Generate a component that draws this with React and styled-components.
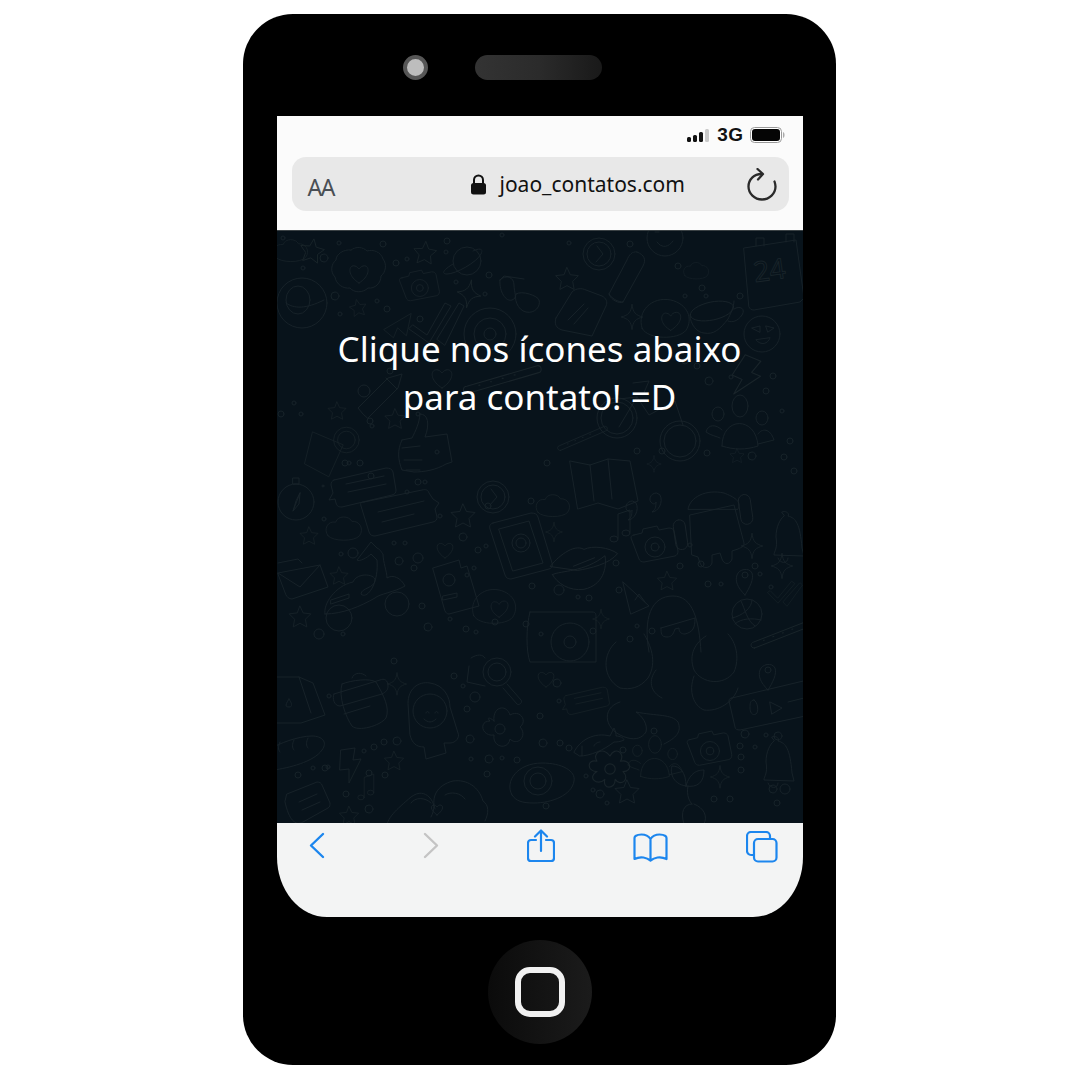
import React from "react";
import styled, { createGlobalStyle } from "styled-components";

const GlobalStyle = createGlobalStyle`
  html, body {
    margin: 0;
    padding: 0;
    background: #fff;
  }
`;

const Page = styled.div`
  width: 1080px;
  height: 1080px;
  overflow: hidden;
  padding: 14px 0 0 243px;
  box-sizing: border-box;
  font-family: "Noto Sans", sans-serif;
`;

const Phone = styled.div`
  width: 593px;
  height: 1051px;
  background: #000;
  border-radius: 50px;
  display: flex;
  flex-direction: column;
  align-items: center;
`;

const TopBezel = styled.div`
  width: 100%;
  height: 102px;
  flex: none;
  box-sizing: border-box;
  padding: 4px 0 0 160px;
  display: flex;
  align-items: center;
  gap: 47px;
`;

const Camera = styled.div`
  width: 17px;
  height: 17px;
  border-radius: 50%;
  background: #bdbdbd;
  border: 4px solid #565656;
`;

const Speaker = styled.div`
  width: 127px;
  height: 25px;
  border-radius: 13px;
  background: linear-gradient(90deg, #333 0%, #2b2b2b 50%, #191919 100%);
`;

const Screen = styled.div`
  width: 526px;
  height: 801px;
  flex: none;
  display: flex;
  flex-direction: column;
  overflow: hidden;
  border-radius: 0 0 50px 50px / 0 0 60px 60px;
`;

const Chrome = styled.div`
  height: 114px;
  flex: none;
  background: #fbfbfb;
  border-bottom: 1px solid #3b4245;
  display: flex;
  flex-direction: column;
`;

const StatusRow = styled.div`
  height: 41px;
  flex: none;
  box-sizing: border-box;
  padding: 0 17px 3px 0;
  display: flex;
  align-items: center;
  justify-content: flex-end;
`;

const Carrier = styled.span`
  font-family: "Liberation Sans", sans-serif;
  font-weight: 700;
  font-size: 19px;
  letter-spacing: 0.5px;
  color: #111;
  margin: 0 6px 0 7px;
`;

const AddressBar = styled.div`
  height: 54px;
  margin: 0 14px 0 15px;
  background: #e8e8e8;
  border-radius: 14px;
  display: flex;
  align-items: center;
  padding: 0 12px 0 16px;
`;

const TextSize = styled.span`
  font-size: 23px;
  letter-spacing: -1.5px;
  color: #4a4f55;
  width: 162px;
  flex: none;
  padding-top: 6px;
`;

const Url = styled.span`
  font-size: 21px;
  color: #111;
  margin-left: 13px;
  flex: 1;
`;

const Wall = styled.div`
  position: relative;
  flex: 1;
  background: #08131b;
  overflow: hidden;
`;

const WallArt = styled.svg`
  position: absolute;
  inset: 0;
  width: 100%;
  height: 100%;
`;

const Message = styled.p`
  position: relative;
  margin: 0;
  padding-top: 94px;
  text-align: center;
  font-size: 35px;
  line-height: 48px;
  color: #fff;
`;

const BottomBar = styled.div`
  height: 94px;
  flex: none;
  background: #f3f4f4;
  display: flex;
  align-items: flex-start;
`;

const BarSlot = styled.div`
  width: ${(p) => p.$w}px;
  flex: none;
  padding: ${(p) => p.$top}px 0 0 ${(p) => p.$left}px;
  box-sizing: border-box;
  line-height: 0;
`;

const BottomBezel = styled.div`
  flex: 1;
  width: 100%;
  box-sizing: border-box;
  padding-top: 2px;
  display: flex;
  align-items: center;
  justify-content: center;
`;

const HomeButton = styled.div`
  width: 104px;
  height: 104px;
  border-radius: 50%;
  background: linear-gradient(90deg, #0b0b0b, #1b1b1b);
  display: flex;
  align-items: center;
  justify-content: center;
`;

const HomeSquare = styled.div`
  width: 38px;
  height: 38px;
  border: 6px solid #f1f1f1;
  border-radius: 15px;
`;

const BLUE = "#1c86ee";

function SignalBars() {
  return (
    <svg width="23" height="15" viewBox="0 0 23 15">
      <rect x="0" y="9" width="4" height="5" rx="1.5" fill="#111" />
      <rect x="6" y="7" width="4" height="7" rx="1.5" fill="#111" />
      <rect x="12" y="4" width="4" height="10" rx="1.5" fill="#111" />
      <rect x="18" y="1" width="4" height="13" rx="1.5" fill="#c9c9c9" />
    </svg>
  );
}

function Battery() {
  return (
    <svg width="36" height="16" viewBox="0 0 36 16">
      <rect x="0.5" y="0.5" width="31" height="15" rx="4" fill="#fff" stroke="#999" />
      <rect x="2" y="2" width="28" height="12" rx="3" fill="#050505" />
      <path d="M33 5c2 .5 2 5.500 0 6z" fill="#aaa" />
    </svg>
  );
}

function LockIcon() {
  return (
    <svg width="17" height="21" viewBox="0 0 17 21" fill="none">
      <path d="M4 10V6a4.500 4.500 0 0 1 9 0v4" stroke="#111" strokeWidth="2" />
      <rect x="1" y="9" width="15" height="11.500" rx="2.500" fill="#111" />
    </svg>
  );
}

function ReloadIcon() {
  return (
    <svg width="30" height="33" viewBox="0 0 30 33" fill="none" stroke="#2a2a2a" strokeWidth="2.300" strokeLinecap="round" strokeLinejoin="round">
      <path d="M14.500 6C7 6 1.500 11.500 1.500 18.500S7.500 31.500 15 31.500 28.500 25.500 28.500 18.500c0-2-.5-3.500-1-5" />
      <path d="M10.500 1L16 6l-5 5.500" />
    </svg>
  );
}

function Chevron({ color, flip }) {
  return (
    <svg width="16" height="27" viewBox="0 0 16 27" fill="none">
      <path
        d={flip ? "M2 2l12 11.500L2 25" : "M14 2L2 13.500 14 25"}
        stroke={color}
        strokeWidth="2.400"
        strokeLinecap="round"
        strokeLinejoin="round"
      />
    </svg>
  );
}

function ShareIcon() {
  return (
    <svg width="28" height="34" viewBox="0 0 28 34" fill="none" stroke={BLUE} strokeWidth="2.200" strokeLinecap="round" strokeLinejoin="round">
      <path d="M9 11H4a3 3 0 0 0-3 3v15a3 3 0 0 0 3 3h20a3 3 0 0 0 3-3V14a3 3 0 0 0-3-3h-5" />
      <path d="M14 22V2M8 7.500L14 1.500l6 6" />
    </svg>
  );
}

function BookIcon() {
  return (
    <svg width="35" height="29" viewBox="0 0 35 29" fill="none" stroke={BLUE} strokeWidth="2.200" strokeLinecap="round" strokeLinejoin="round">
      <path d="M17.500 27V6c-2-3-5-4.500-9-4.500-2.500 0-4.500.5-6 1.500-.5.500-1 1-1 2L1.500 26c3-1.500 6-2 9-1.500 3 .5 5 1.500 7 3 2-1.500 4-2.500 7-3 3-.5 6 0 9 1.500L33.500 5c0-1-.5-1.500-1-2-1.500-1-3.500-1.500-6-1.500-4 0-7 1.500-9 4.500" />
    </svg>
  );
}

function TabsIcon() {
  return (
    <svg width="32" height="32" viewBox="0 0 32 32" fill="none" stroke={BLUE} strokeWidth="2.200" strokeLinejoin="round">
      <path d="M7 24H5a4 4 0 0 1-4-4V5a4 4 0 0 1 4-4h15a4 4 0 0 1 4 4v2" />
      <rect x="8" y="8" width="22.500" height="22.500" rx="4" />
    </svg>
  );
}

// local outlines, all drawn round 0,0
const SHAPES = {
  star: <path d="M0-12l3.500 7.500 8.500 1-6 6 1.500 8.500L0 7l-7.500 4 1.500-8.500-6-6 8.500-1z" />,
  spark: <path d="M0-14C1 -5 4-2 12 0 4 2 1 5 0 14-1 5-4 2-12 0-4-2-1-5 0-14z" />,
  heart: <path d="M0 10C-14 1-11-10-4-8c2 .5 3 2 4 3 1-1 2-2.500 4-3C11-10 14 1 0 10z" />,
  cloud: <path d="M-20 8c-6-8 0-18 9-16 2-8 16-8 19-1 9-1 15 9 9 17-6 7-31 7-37 0z" />,
  camera: (
    <g>
      <path d="M-20-12l8-2 1-4 14-3 2 4 10-2c3 0 4 1 5 3l4 20c0 3-1 4-3 5l-31 6c-3 0-4-1-5-3l-8-21c0-2 1-3 3-3z" />
      <circle cx="1" cy="0" r="10" />
      <circle cx="1" cy="0" r="4" />
    </g>
  ),
  planet: (
    <g>
      <circle r="14" />
      <path d="M-14 3c-10 6-12 10-6 10 9 0 30-12 34-20 3-6-2-6-8-3" />
    </g>
  ),
  flower: (
    <g>
      <path d="M-8-24c5-4 12-3 16 1 6-2 14 1 16 8 4 5 3 13-2 17 0 7-6 13-13 12-5 5-14 5-18 0-7 1-14-4-15-11-5-5-4-13 1-17 0-6 8-11 15-10z" />
      <path d="M0 9C-13 1-10-10-4-8c2 .5 3 2 4 3 1-1 2-2.500 4-3C10-10 13 1 0 9z" />
    </g>
  ),
  ball: (
    <g>
      <circle r="25" />
      <ellipse cx="-4" cy="-3" rx="12" ry="14" />
      <path d="M-16 0c8 6 20 6 38-3" />
    </g>
  ),
  glasses: (
    <g>
      <path d="M-20-14c6-6 14-3 14 5S-2 4-8 6s-13-8-12-20z" />
      <path d="M-4 0c6-4 22 2 23 6 2 6-4 14-13 12S-6 4-4 0z" />
      <path d="M-20-14l4-4 20 3" />
    </g>
  ),
  plane: <path d="M-20 8L14-12 8 16-3 6-8 18z" />,
  check: (
    <g>
      <path d="M-24 4l14 10 18-32 6 3L-8 22-28 8z" />
      <path d="M0 18L22-18l5 3L8 24z" />
    </g>
  ),
  donut: (
    <g>
      <circle r="26" />
      <circle r="16" />
      <circle r="6" />
    </g>
  ),
  pencil: <path d="M-24 20l-5-6 30-30 14-4-4 14-30 30zM-1-16l11 11" />,
  thumb: <path d="M-22-8l10-2c4-8 7-14 8-24 8 0 10 10 5 23l22-3 5 28-6 2c-10 6-22 8-32 8l-12-2c-4-10-5-20 0-30zM-22 0l18-2M-20 12h18M-18 22h14" />,
  cocktail: (
    <g>
      <path d="M-24-20L14-4-4 36-34 20z" />
      <circle cx="18" cy="-10" r="16" />
      <circle cx="18" cy="-10" r="11" />
    </g>
  ),
  clock: (
    <g>
      <circle r="16" />
      <circle r="12" />
      <path d="M-2-8L4 0-3 8" />
    </g>
  ),
  bottle: <path d="M10-26c8 3 9 8 6 14L-4 24c-4 2-12-2-14-8L0-18c2-5 5-9 10-8zM-18 16c4 6 10 8 14 8" />,
  calendar: (
    <g>
      <path d="M-26-26l52-8 8 58-4 4-46 8c-3 0-4-1-5-3zM-14-28v-8h8v8M16-32v-8h8v8" />
      <text x="0" y="6" fontFamily="Noto Sans, sans-serif" fontSize="28" fill="none" textAnchor="middle" transform="rotate(-8)">24</text>
    </g>
  ),
  cup: (
    <g>
      <ellipse rx="22" ry="9" transform="rotate(-12)" />
      <path d="M-22 4c0 10 8 18 14 18 10 2 16-4 24-14 2-4 6-12 6-18M22-2c6-4 12 0 8 6-4 6-10 8-14 6" />
    </g>
  ),
  box: <path d="M-26 0l16-26c4-4 10-4 14-2l16 6c4 2 6 6 4 10l-14 30-30-6c-6-2-8-6-6-12zM-14 2l16-16M-8 6L6-10" />,
  blobheart: (
    <g>
      <path d="M-24 10C-30-8-14-24 6-20c18 4 24 20 16 32-8 10-40 10-46-2z" />
      <path d="M6 12C-8 4-4-8 2-6c2 0 3 2 4 3 1-2 3-4 6-4 6 0 8 10-6 19z" />
    </g>
  ),
  face: (
    <g>
      <circle r="18" />
      <path d="M-10-6l8-2v6zM4-8l8 2-6 4zM-6 6c5 6 12 4 14-2z" />
    </g>
  ),
  smile: (
    <g>
      <circle r="18" />
      <path d="M-8 4c5 7 12 5 16-1M-10-6h4M5-8h4" />
    </g>
  ),
  wheel: (
    <g>
      <circle r="20" />
      <circle r="16" />
    </g>
  ),
  bike: <path d="M-58-22l18-2 12 18 26-14 8 24M-40-24l-18 30M-44-38l16-2-6 14" />,
  people: (
    <g>
      <ellipse cx="0" cy="-22" rx="8" ry="11" />
      <ellipse cx="-22" cy="-14" rx="6" ry="7" />
      <ellipse cx="22" cy="-10" rx="6" ry="7" />
      <path d="M-18 18c0-30 34-30 36 0-12 4-24 4-36 0zM-18 2c-6-6-14-6-16 2 6 4 10 4 14 6M18 6c4-6 12-6 16 6l-16 4" />
    </g>
  ),
  map: <path d="M-30-10l20 4 18-6 22 2 8 40-20 8-20-6-20 6zM-10-6l4 36M8-12l4 40" />,
  compass: (
    <g>
      <circle r="18" />
      <path d="M4-9L-3 9 0-1zM4-9L3 2-3 9M-3-24h6v6h-6z" />
    </g>
  ),
  bubble: <path d="M-30-12l52-12c4 0 6 1 7 4l3 18c0 3-1 4-4 5l-50 12c-4 0-5-1-6-4l-1-4-6 1 4-7-2-8c0-3 1-4 3-5zM-18-8l38-8M-16 0l38-8" />,
  bubbleBig: <path d="M-40-14l58-12c4-1 6 0 7 3l4 6 6 4-4 6 2 8c0 3-1 4-4 5l-58 14c-3 0-5-1-6-4l-8-26c-1-3 0-4 3-4zM-26-4l46-11M-22 6l32-8" />,
  phone: (
    <g>
      <path d="M-26-24l38-10c4 0 6 1 7 4l14 46c1 3 0 5-3 6l-38 10c-3 0-5-1-6-4l-15-46c-1-3 0-5 3-6z" />
      <path d="M-20-18l30-8 14 42-30 8z" />
      <circle cx="2" cy="-4" r="9" />
      <circle cx="2" cy="-4" r="5" />
    </g>
  ),
  envelope: <path d="M-26-8l42-8 8 22-36 12c-3 0-5-2-6-4zM-26-8l22 14 20-22M-26-18l20-4 4 4" />,
  scooter: (
    <g>
      <path d="M-42 22c-2-10 10-28 28-32 4-10 22-8 22-2 0 8-14 8-14 14 6 6 18-10 16-34l-6-6c-4 4-12 8-14 6l14-18 6 6c4 2 4 4 6 6 0 8 4 18 4 24 6-4 14 0 18 8-10 6-26 8-30 12-14 8-32 16-50 16z" />
      <circle cx="-28" cy="26" r="13" />
      <circle cx="30" cy="12" r="12" />
      <path d="M-36 8l18-6 0 4-18 6z" />
    </g>
  ),
  passport: (
    <g>
      <path d="M-16-18l26-8 2 8 6-2 12 40-30 8c-2 0-3-1-4-3z" />
      <circle cx="0" cy="-6" r="6" />
      <path d="M-6 10l14-3v4l-14 3z" />
    </g>
  ),
  lips: (
    <g>
      <path d="M-32 4c6-8 22-22 32-16 8-4 24-2 32 4-8 10-26 14-38 16z" />
      <path d="M-30 12c8-4 30-2 50-18 2 12-2 28-20 32-14 2-26-6-30-14zM-10 4l20-8" />
    </g>
  ),
  android: (
    <g>
      <path d="M-26-20c2-12 18-20 36-16 10 4 18 8 14 16z" />
      <path d="M-24-14l44-10 10 38c0 4-2 4-6 6l-6 2v8c-2 6-8 6-10 0l-2-6-8 2v8c-2 6-10 6-12 0l-2-6-6-2z" />
      <rect x="-40" y="-14" width="12" height="30" rx="6" transform="rotate(-8)" />
      <rect x="28" y="-30" width="12" height="30" rx="6" transform="rotate(-8)" />
    </g>
  ),
  bell: <path d="M-2-24c4-2 8 2 6 4 8 2 12 8 14 32l2 8-30-1c0-4 4-6 2-18 0-10 4-18 8-21zM-6 22c2 6 10 6 10 0" />,
  music: (
    <g>
      <path d="M-6 12V-12l12-4v22" />
      <ellipse cx="-10" cy="13" rx="4" ry="3" />
      <ellipse cx="2" cy="7" rx="4" ry="3" />
    </g>
  ),
  quotes: <path d="M-18-8c-6 0-8 8-4 10 2 2 4 0 4-1 0 6-1 8-4 10 6 0 12-10 8-17zM6-16c-6 0-8 8-4 10 2 2 4 0 4-1 0 6-1 8-4 10 6 0 12-10 8-17z" />,
  wedge: <path d="M-12-14l26 24-18 8zM0 4l4-6 6 8" />,
  record: (
    <g>
      <path d="M-40-24l62 0c4 0 4 2 4 6v44h-66c-4-10-4-36 0-50z" />
      <circle cx="0" cy="6" r="19" />
      <circle cx="0" cy="6" r="6" />
    </g>
  ),
  ghost: (
    <g>
      <path d="M-28 30c-6-34 2-56 24-56 20 0 26 24 28 56" />
      <path d="M-16 6l34-10c0 10-2 14-10 16-4 0-6-2-6-6l-4 1c-2 6-4 8-8 8-6 0-6-4-6-9z" />
    </g>
  ),
  basket: (
    <g>
      <circle r="15" />
      <path d="M-15 4c10-2 20-10 20-18M-6-13c4 8 6 20 14 25M-12 10C-6 4 6 4 14 6" />
    </g>
  ),
  pin: (
    <g>
      <path d="M0 14c-8-8-10-14-8-20 2-6 12-8 15-2 2 6-2 14-7 22z" />
      <circle cy="-6" r="3" />
    </g>
  ),
  milk: <path d="M-20-22h22l14 6 12 32-24 8h-26zM2-22l12 36M-8 0c-4 6-4 8 0 8 3 0 4-2 0-8z" />,
  bread: <path d="M-26 26C-12 24 14 18 22 6c6-8 0-14-10-14-14 0-34 8-40 12M-20-2c-2 4-2 8 0 10M-6-4c-2 4-2 8 0 10M8-6c-2 4-2 8 0 10" />,
  pack: (
    <g>
      <path d="M-22-22c10-4 28-6 34-2 8 14 14 26 10 36-6 8-28 14-34 8-6-8-14-30-10-42z" />
      <path d="M-12-28c2-6 10-6 14-2M-30-12l46-14c4-2 8 0 8 6 0 4-2 6-6 8l-42 12c-6 0-8-8-6-12zM-20 8l26-8" />
    </g>
  ),
  astro: (
    <g>
      <path d="M-22-16c0-14 10-22 22-20 14 2 20 14 20 24l8 26c2 4-2 10-8 10h-6l2 10-20 6-2-12c-8 0-12-4-14-12z" />
      <circle cx="0" cy="-8" r="17" />
      <path d="M-4-6c0-2 3-2 3 0M5-6c0-2 3-2 3 0M-6 0c4 4 8 4 12 0" />
    </g>
  ),
  petals: (
    <g>
      <path d="M-6-8c-2-14 12-18 16-6 10-6 18 6 10 12 8 8-2 20-10 12-2 12-18 8-16-4-12 2-16-14-4-14-4-4 0-4 4 0z" />
      <circle r="5" />
    </g>
  ),
  magnifier: (
    <g>
      <circle r="14" />
      <circle r="9" />
      <path d="M10 12l14 16c2 2-2 6-4 4L6 16M-26-14c6-4 12-4 14 0M-28-6l-2 16 18 4" />
    </g>
  ),
  bolt: <path d="M-6-14l14-2-2 12 8-1-12 24 0-14-9 1z" />,
  note: <path d="M-22-8l30-12c3 0 4 1 5 3l8 18c0 2 0 4-2 5L-6 20c-8 4-14-2-18-20zM-10 0l18-8M-7 8l18-8" />,
  hands: (
    <g>
      <path d="M-50 30c-2-10 10-20 24-32 8-6 14-4 18 0 6 6 6 12 2 20M-2 10c-4-12 2-24 18-28 14-2 26 6 30 20 6 4 6 12 2 20" />
      <path d="M0 16c-8-6-6-10-3-10 1 0 2 1 3 2 1-1 2-2 3-2 3 0 5 4-3 10zM-26 4c4-6 14-6 20 0M8-4c6-4 16-2 20 4" />
    </g>
  ),
  fish: <path d="M-20 10c6-12 20-20 36-16l4-8c2 4 2 6 2 8 4 0 8 2 8 4-4 2-8 2-10 2-10 8-24 14-34 14zM-12 4v10M6 0c-2 0-6 2-6 4" />,
  eye: (
    <g>
      <path d="M-40 16c-8-14 6-32 30-32 20 0 34 8 32 18-2 14-22 22-40 22-12 0-18-2-22-8z" />
      <circle cx="-14" cy="2" r="14" />
      <circle cx="-14" cy="2" r="8" />
    </g>
  ),
  snake: <path d="M-46-54c-14 12-14 36 4 46 10 2 20 0 28-10 10-16 2-34-4-44M-42 6c-20 6-16 30 8 36 8 2 14 0 18-6 2-8-4-16-10-20 20 4 36 2 42 10 4 10-2 16-14 22M-6-26c-8 10-6 22 6 28M44-60c-10 6-18 18-12 34 8 14 30 16 40 2 6-14 2-30-6-38M32-20c-6 16 0 30 10 34 14 2 30-8 34-22" />,
  voice: (
    <g>
      <path d="M-42-8l84-20c3 0 4 1 5 3l6 26c0 3-1 4-3 5l-84 18c-3 0-5-1-5-3l-6-26c0-2 1-3 3-3z" />
      <path d="M-20-6c-4 0-4 4-4 8s2 8 6 6c3-2 2-12-2-14zM-4-4L8 2-2 8zM14-4l24-6" />
    </g>
  ),
  gear: (
    <g>
      <path d="M0-10c4-8 12-2 8 4 8-2 10 8 2 8 6 6-2 12-6 6 0 8-10 8-8 0-6 6-14-2-6-6-8 0-8-10 0-8-4-6 4-12 10-4z" />
      <circle r="4" />
    </g>
  ),
  leaves: (
    <g>
      <path d="M-4-6c-14-2-16-14-14-20 8 0 14 6 14 20zM-4-6c4-14 12-16 18-16 0 12-6 18-18 16zM-2-6c-2 10 2 16 4 18M2 12c-8 0-12 8-8 20M4 12c10 4 14 12 10 20" />
    </g>
  ),
  lines: <path d="M-30 12l60-12c4 0 4-6 0-6l-60 12c-4 0-4 6 0 6zM-20 6h1M-10 4h1M0 2h1M10 0h1" />,
};

// kind, x, y, rotation, scale — placed to follow the wallpaper
const DOODLES = [
  ["star", 35, 20, 10, 1], ["flower", 82, 43, 0, 1], ["ball", 25, 72, 0, 1], ["star", 81, 77, -10, 0.7],
  ["camera", 142, 57, 0, 0.85], ["star", 148, 22, 5, 0.95], ["planet", 190, 30, 0, 1], ["spark", 192, 63, 10, 1],
  ["glasses", 243, 63, 0, 1], ["plane", 123, 92, 0, 0.8], ["check", 160, 90, 0, 1], ["donut", 213, 103, 0, 1],
  ["pencil", 110, 163, 0, 1], ["heart", 165, 147, 0, 1], ["lines", 225, 145, -5, 1.2], ["thumb", 147, 217, 0, 1],
  ["cocktail", 55, 217, 0, 0.8], ["star", 60, 180, 0, 0.75], ["star", 118, 188, 0, 0.85], ["cloud", 15, 20, 0, 0.8],
  ["clock", 322, 23, 0, 1], ["bottle", 350, 47, 0, 1], ["calendar", 493, 43, 0, 1], ["cup", 435, 80, 0, 1],
  ["box", 305, 87, 0, 1], ["spark", 355, 86, 0, 0.9], ["blobheart", 388, 88, 0, 0.95], ["face", 485, 103, 0, 1],
  ["star", 290, 48, 0, 0.95], ["smile", 388, 7, 0, 1], ["wheel", 403, 210, 0, 1], ["wheel", 340, 187, 0, 1],
  ["bike", 400, 190, 0, 1], ["people", 463, 197, 0, 1], ["map", 323, 240, 0, 1], ["star", 460, 225, 0, 0.6],
  ["spark", 377, 233, 0, 0.6], ["cloud", 420, 40, 0, 0.6], ["lines", 305, 205, -12, 0.8], ["bolt", 466, 142, 30, 1.2],

  ["compass", 19, 271, 0, 1], ["bubble", 87, 261, 0, 1], ["bubbleBig", 127, 285, 0, 1], ["clock", 216, 266, 0, 1],
  ["cloud", 68, 298, 0, 0.85], ["star", 32, 305, 0, 0.75], ["star", 186, 285, 0, 1], ["star", 62, 345, 0, 0.75],
  ["star", 23, 386, 0, 0.9], ["phone", 242, 316, 0, 1], ["envelope", 27, 350, 0, 1], ["scooter", 90, 361, 0, 1],
  ["passport", 172, 355, 0, 1], ["blobheart", 217, 376, 0, 0.85], ["heart", 168, 319, 0, 0.8],
  ["cloud", 277, 275, 0, 0.8], ["lips", 307, 331, 0, 1.05], ["camera", 377, 316, 0, 1], ["android", 437, 298, 0, 1],
  ["bell", 507, 305, 0, 1], ["music", 347, 295, 0, 1], ["quotes", 373, 278, 0, 1], ["star", 390, 350, 0, 0.8],
  ["wedge", 358, 365, 0, 1], ["record", 293, 405, 0, 1], ["ghost", 400, 391, 0, 1], ["basket", 470, 383, 0, 1],
  ["spark", 475, 315, 0, 0.9], ["spark", 505, 335, 0, 0.9], ["pin", 468, 350, 0, 1], ["spark", 277, 301, 0, 0.7],
  ["check", 508, 360, 10, 0.6], ["lines", 505, 400, -10, 1], ["spark", 324, 388, 0, 0.7],

  ["milk", 20, 468, 0, 1], ["bread", 23, 513, 0, 1], ["pack", 87, 475, 0, 1], ["astro", 153, 488, 0, 1],
  ["petals", 223, 498, 0, 1], ["magnifier", 220, 441, 0, 1], ["bolt", 70, 533, 0, 1], ["star", 117, 530, 0, 0.8],
  ["note", 32, 571, 0, 1], ["hands", 160, 568, 0, 1], ["music", 92, 556, 0, 0.8], ["spark", 120, 453, 0, 0.8],
  ["star", 72, 585, 0, 0.8], ["eye", 275, 548, 0, 1], ["bubble", 310, 473, 0, 0.7], ["fish", 317, 511, 0, 1],
  ["snake", 385, 465, 0, 1], ["voice", 497, 475, 0, 1], ["camera", 432, 520, 0, 0.95], ["bell", 497, 530, 0, 1],
  ["people", 378, 531, 0, 0.8], ["gear", 333, 538, 0, 1.3], ["star", 350, 561, 0, 1], ["spark", 443, 546, 0, 0.8],
  ["leaves", 413, 561, 0, 1], ["pin", 491, 445, 0, 1], ["heart", 269, 448, 0, 0.8],
];

// the little rings scattered between the drawings
const DOTS = [
  [6, 7, 2], [47, 27, 4], [62, 12, 2], [106, 13, 3], [119, 32, 3], [130, 28, 2], [58, 65, 4], [100, 70, 2],
  [110, 78, 3], [63, 83, 2], [143, 88, 3], [170, 10, 3], [169, 21, 2], [179, 51, 2], [208, 63, 2], [212, 44, 3],
  [225, 4, 2], [26, 37, 2], [113, 140, 3], [93, 190, 3], [24, 183, 2], [17, 172, 2], [4, 183, 3], [87, 160, 6],
  [68, 232, 3], [72, 232, 2], [83, 232, 3], [95, 195, 2], [141, 183, 2], [160, 221, 2], [94, 245, 3], [148, 251, 2],
  [270, 232, 3], [292, 12, 2], [353, 13, 3], [401, 35, 3], [425, 57, 3], [408, 65, 2], [429, 65, 2], [463, 65, 3],
  [408, 130, 3], [420, 135, 3], [432, 150, 4], [454, 146, 2], [489, 160, 3], [496, 145, 3], [505, 180, 2], [513, 210, 3],
  [360, 220, 3], [385, 220, 3], [430, 222, 3], [475, 225, 4], [507, 226, 3], [517, 240, 3], [46, 255, 1],
  [130, 261, 2], [141, 251, 3], [47, 288, 2], [64, 323, 2], [76, 322, 5], [117, 312, 2], [128, 312, 2], [141, 327, 5],
  [122, 330, 4], [137, 337, 3], [163, 285, 2], [197, 337, 2], [190, 344, 2], [201, 319, 3], [186, 306, 4], [209, 315, 2],
  [211, 275, 3], [254, 270, 3], [255, 355, 3], [282, 359, 5], [301, 366, 2], [312, 367, 3], [339, 332, 3], [342, 359, 3],
  [413, 314, 2], [424, 333, 3], [403, 335, 3], [431, 353, 3], [444, 353, 2], [478, 335, 3], [483, 343, 2], [494, 356, 2],
  [42, 403, 5], [66, 403, 2], [145, 375, 3], [151, 396, 4], [173, 388, 2], [189, 398, 3], [199, 401, 2], [218, 391, 3],
  [249, 393, 3], [264, 403, 2], [316, 400, 3], [353, 408, 3], [360, 395, 2], [375, 400, 3], [117, 430, 3], [52, 465, 2],
  [177, 445, 3], [186, 455, 2], [198, 466, 5], [190, 478, 3], [193, 508, 4], [194, 528, 2], [87, 520, 2], [97, 516, 3],
  [107, 511, 3], [120, 510, 4], [51, 536, 2], [36, 537, 2], [48, 537, 3], [92, 542, 3], [108, 544, 3], [69, 563, 3],
  [92, 578, 4], [21, 544, 3], [212, 528, 4], [225, 527, 2], [240, 529, 3], [210, 543, 3], [263, 485, 3], [282, 470, 2],
  [280, 452, 4], [283, 512, 3], [266, 512, 4], [292, 517, 3], [309, 545, 2], [316, 559, 2], [323, 563, 4], [330, 572, 2],
  [377, 500, 3], [346, 519, 3], [468, 503, 4], [489, 504, 2], [463, 515, 3], [478, 516, 2], [464, 526, 3], [464, 539, 3],
  [501, 505, 4], [496, 558, 4], [508, 558, 5], [500, 572, 3], [437, 568, 3], [453, 568, 3], [269, 575, 3],
];

function Doodles() {
  return (
    <WallArt viewBox="0 0 526 592" fill="none" stroke="#19242a" strokeWidth="0.900" strokeLinejoin="round" strokeLinecap="round">
      {DOODLES.map(([kind, x, y, rot, scale], i) => (
        <g key={i} transform={`translate(${x} ${y}) rotate(${rot}) scale(${scale})`}>
          {SHAPES[kind]}
        </g>
      ))}
      {DOTS.map(([x, y, r], i) => (
        <circle key={i} cx={x} cy={y} r={r} />
      ))}
    </WallArt>
  );
}

export default function App() {
  return (
    <Page>
      <GlobalStyle />
      <Phone>
        <TopBezel>
          <Camera />
          <Speaker />
        </TopBezel>
        <Screen>
          <Chrome>
            <StatusRow>
              <SignalBars />
              <Carrier>3G</Carrier>
              <Battery />
            </StatusRow>
            <AddressBar>
              <TextSize>AA</TextSize>
              <LockIcon />
              <Url>joao_contatos.com</Url>
              <ReloadIcon />
            </AddressBar>
          </Chrome>
          <Wall>
            <Doodles />
            <Message>
              Clique nos ícones abaixo
              <br />
              para contato! =D
            </Message>
          </Wall>
          <BottomBar>
            <BarSlot $w={110} $top={9} $left={32}><Chevron color={BLUE} /></BarSlot>
            <BarSlot $w={140} $top={9} $left={36}><Chevron color="#c4c4c4" flip /></BarSlot>
            <BarSlot $w={106} $top={6} $left={0}><ShareIcon /></BarSlot>
            <BarSlot $w={113} $top={10} $left={0}><BookIcon /></BarSlot>
            <BarSlot $w={57} $top={8} $left={0}><TabsIcon /></BarSlot>
          </BottomBar>
        </Screen>
        <BottomBezel>
          <HomeButton>
            <HomeSquare />
          </HomeButton>
        </BottomBezel>
      </Phone>
    </Page>
  );
}
